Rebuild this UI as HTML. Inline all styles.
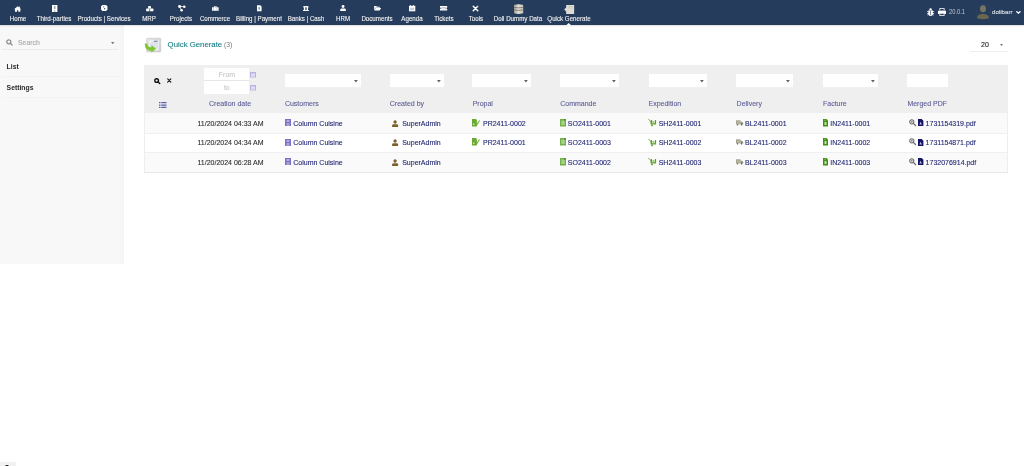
<!DOCTYPE html><html><head><meta charset="utf-8"><style>
*{margin:0;padding:0;box-sizing:border-box}
html,body{width:1024px;height:466px;overflow:hidden;background:#fff;font-family:"Liberation Sans",sans-serif}
#root{position:absolute;left:0;top:0;width:1024px;height:466px;will-change:transform}
.a{position:absolute;white-space:nowrap;line-height:1}
svg{position:absolute;overflow:visible;z-index:3}
#hdr{position:absolute;left:0;top:0;width:1024px;height:25px;background:#263c5c;box-shadow:0 1px 1.5px rgba(0,0,0,0.13);z-index:2}
.mt{position:absolute;z-index:3;top:15.9px;font-size:6.5px;color:#f4f4f4;transform:translateX(-50%) scaleX(0.95);-webkit-text-stroke:0.1px #f4f4f4;white-space:nowrap;line-height:1}
#side{position:absolute;left:0;top:25px;width:123.7px;height:238.7px;background:linear-gradient(to right,#f8f8f8 0,#f8f8f8 119px,#f4f4f4 123.7px)}
.th{position:absolute;top:100px;font-size:7px;color:#5a5a96;-webkit-text-stroke:0.08px #5a5a96;line-height:1;white-space:nowrap}
.td{position:absolute;font-size:7px;color:#1c2270;-webkit-text-stroke:0.08px #1c2270;line-height:1;white-space:nowrap}
.dt{color:#2e2e2e;-webkit-text-stroke:0.1px #2e2e2e}
.sel{position:absolute;top:74px;height:13px;background:#fff}
.sel svg{position:absolute;right:3.3px;top:5.5px}
</style></head><body><div id="root">
<div id="hdr"></div>
<div class="mt" style="left:17.6px">Home</div>
<div class="mt" style="left:54.1px">Third-parties</div>
<div class="mt" style="left:104.1px">Products | Services</div>
<div class="mt" style="left:149.4px">MRP</div>
<div class="mt" style="left:181px">Projects</div>
<div class="mt" style="left:215px">Commerce</div>
<div class="mt" style="left:259.1px">Billing | Payment</div>
<div class="mt" style="left:305.9px">Banks | Cash</div>
<div class="mt" style="left:342.5px">HRM</div>
<div class="mt" style="left:377.4px">Documents</div>
<div class="mt" style="left:411.9px">Agenda</div>
<div class="mt" style="left:444px">Tickets</div>
<div class="mt" style="left:475.5px">Tools</div>
<div class="mt" style="left:518.2px">Doli Dummy Data</div>
<div class="mt" style="left:569px">Quick Generate</div>
<svg style="left:13.9px;top:5.6px" width="7.3" height="5.8" viewBox="0 0 16 13"><path fill="#fff" d="M8 0.5L11 3V1H13V4.8L16 7.3H14V13H9.5V9.5H6.5V13H2V7.3H0Z"/></svg>
<svg style="left:51.5px;top:4.8px" width="5.4" height="7" viewBox="0 0 10 13"><rect width="10" height="13" fill="#fff"/><rect x="3.5" y="1.5" width="3" height="6" fill="#a0a8b8"/><rect x="3.8" y="9" width="2.4" height="4" fill="#c0c6d0"/></svg>
<svg style="left:100.8px;top:5.1px" width="6.5" height="5.9" viewBox="0 0 14 13"><path fill="#fff" d="M3 0H11L14 3V10L11 13H3L0 10V3Z"/><ellipse cx="5.8" cy="4" rx="1.4" ry="1.5" fill="#43506a"/><ellipse cx="8" cy="8.2" rx="1.5" ry="1.7" fill="#3b4660"/></svg>
<svg style="left:145.8px;top:5.8px" width="7.6" height="5.4" viewBox="0 0 16 11"><rect x="4.5" y="0" width="6" height="5.5" rx="1" fill="#fff"/><rect x="0.3" y="5" width="7.2" height="6" rx="1.2" fill="#fff"/><rect x="8.3" y="5" width="7.4" height="6" rx="1.2" fill="#fff"/><path d="M7.9 4.5V11" stroke="#263c5c" stroke-width="0.8"/></svg>
<svg style="left:177.5px;top:4.9px" width="7.8" height="6.4" viewBox="0 0 16 13"><path d="M3.2 3.1H12.7M3.2 3.1L7.4 10.6" stroke="#fff" stroke-width="1.6"/><circle cx="3.2" cy="3.1" r="3" fill="#fff"/><circle cx="12.9" cy="3.6" r="2.6" fill="#fff"/><circle cx="7.4" cy="10.6" r="2.7" fill="#fff"/></svg>
<svg style="left:212px;top:6.2px" width="6.7" height="4.7" viewBox="0 0 14 10"><path fill="#fff" d="M0 2.5H14V10H0Z M4.5 0H9.5V2.5H8V1.2H6V2.5H4.5Z"/><rect x="3" y="2.5" width="1" height="7.5" fill="#9aa3b3"/><rect x="10" y="2.5" width="1" height="7.5" fill="#9aa3b3"/></svg>
<svg style="left:257.1px;top:5.4px" width="4.6" height="6.3" viewBox="0 0 10 13"><path fill="#fff" d="M0 0H7L10 3V13H0Z"/><rect x="3" y="4" width="3.5" height="6" fill="#9aa3b3"/></svg>
<svg style="left:302.9px;top:5.8px" width="5.8" height="5.1" viewBox="0 0 12 10.6"><path fill="#fff" d="M0.3 0.3Q6 -0.5 11.7 0.3L11.4 3H0.6Z M0 8.4H12V10.6H0Z M1.8 3H4.6V8.6H1.8Z M7.6 3H10.4V8.6H7.6Z"/><rect x="4.6" y="3" width="3" height="5.4" fill="#7a84b0"/></svg>
<svg style="left:339.5px;top:5.4px" width="6.1" height="6.1" viewBox="0 0 12 12"><circle cx="6" cy="3" r="2.8" fill="#fff"/><path fill="#fff" d="M0.5 12V9.5Q0.5 7 3 7H9Q11.5 7 11.5 9.5V12Z"/></svg>
<svg style="left:373.7px;top:6.3px" width="7.3" height="4.4" viewBox="0 0 16 10"><path fill="#fff" d="M0 0H5L6.5 1.5H13V4H3L0 10Z M3.5 4.5H16L12.5 10H0.5Z"/></svg>
<svg style="left:408.7px;top:5.4px" width="6.3" height="6.3" viewBox="0 0 12 12"><path fill="#fff" d="M0 1.5H12V12H0Z"/><rect x="2.5" y="0" width="1.5" height="2.5" fill="#fff"/><rect x="8" y="0" width="1.5" height="2.5" fill="#fff"/><rect x="2" y="5" width="8" height="5" fill="#c8cdd6"/></svg>
<svg style="left:440px;top:6.3px" width="7.2" height="4.6" viewBox="0 0 16 10"><path fill="#fff" d="M0 0H16V3.2A1.8 1.8 0 0 0 16 6.8V10H0V6.8A1.8 1.8 0 0 0 0 3.2Z"/><rect x="3" y="3" width="10" height="4" fill="#8e97a8"/><rect x="4" y="4" width="8" height="2" fill="#fff"/></svg>
<svg style="left:471.9px;top:5px" width="7" height="7" viewBox="0 0 14 14"><path d="M2.5 2.5L11.5 11.5M11.5 2.5L2.5 11.5" stroke="#fff" stroke-width="2.9" stroke-linecap="round"/><circle cx="12" cy="2" r="1.2" fill="#263c5c"/></svg>
<svg style="left:513.8px;top:3.7px" width="9.2" height="10.3" viewBox="0 0 18 20"><defs><linearGradient id="dbg" x1="0" x2="1"><stop offset="0" stop-color="#9c988e"/><stop offset="0.45" stop-color="#e2dfd8"/><stop offset="1" stop-color="#c4c0b6"/></linearGradient></defs><path fill="url(#dbg)" d="M0 1.8Q9 -0.8 18 1.8V18.2Q9 20.8 0 18.2Z"/><path d="M0 6.5Q9 8.5 18 6.5M0 11.5Q9 13.5 18 11.5" stroke="#777164" stroke-width="1.6" fill="none"/></svg>
<svg style="left:564px;top:4.5px" width="10.3" height="9" viewBox="0 0 20 18"><path fill="#dedbd4" d="M4 0H20V18H4V13L0 9L4 5Z"/><path d="M8 3H17M8 6H17" stroke="#bdb9b0" stroke-width="1"/></svg>
<svg style="left:566.3px;top:22.6px" width="5.4" height="2.4" viewBox="0 0 10 4"><path fill="#fff" d="M5 0L10 4.5H0Z"/></svg>
<svg style="left:927px;top:8px" width="7.2" height="8" viewBox="0 0 14 16"><path fill="#fff" d="M4.5 3A2.5 2.5 0 0 1 9.5 3V4.5H4.5Z M2.5 5H11.5V12A4.5 4 0 0 1 2.5 12Z M0 6.5H2.5V8H0Z M11.5 6.5H14V8H11.5Z M0 10H2.5V11.5H0Z M11.5 10H14V11.5H11.5Z M0.5 14L2.5 12.5L3 13.5L1.2 15Z M13.5 14L11.5 12.5L11 13.5L12.8 15Z"/><rect x="6.4" y="5" width="1.2" height="9" fill="#263c5c"/></svg>
<svg style="left:938px;top:8px" width="8" height="8" viewBox="0 0 16 16"><path fill="#fff" d="M3 0H13V5H3Z M0 5.5H16V12H13V10.5H3V12H0Z M3 11H13V16H3Z"/><rect x="4.5" y="1.5" width="7" height="3.5" fill="#263c5c"/><rect x="4.5" y="12" width="7" height="2.5" fill="#263c5c"/></svg>
<div class="a" style="left:949px;top:9.3px;z-index:3;font-size:6.4px;color:#c4c9d2;transform:scaleX(0.9);transform-origin:0 0">20.0.1</div>
<svg style="left:975.5px;top:3.2px" width="15" height="17.5" viewBox="0 0 30 35"><circle cx="15" cy="17" r="14.5" fill="none" stroke="#34466a" stroke-width="0.8"/><ellipse cx="14" cy="11.5" rx="6" ry="7" fill="#777462"/><path fill="#6a6650" d="M2 30.5Q2 22 14 21.5Q26 22 26 30.5Q14 34 2 30.5Z"/></svg>
<div class="a" style="left:992px;top:9.4px;z-index:3;font-size:6.15px;color:#dfe3ea;-webkit-text-stroke:0.08px #dfe3ea">dolibarr</div>
<svg style="left:1015.6px;top:11px" width="4.8" height="2.8" viewBox="0 0 10 6"><path d="M1.5 1.5L5 4.5L8.5 1.5" stroke="#fff" stroke-width="2.8" fill="none" stroke-linecap="round"/></svg>
<div id="side"></div>
<svg style="left:6px;top:39px" width="6.8" height="6.8" viewBox="0 0 14 14"><circle cx="5.8" cy="5.8" r="4.2" stroke="#8d8d8d" stroke-width="2.6" fill="none"/><path d="M9 9L12.5 12.5" stroke="#8d8d8d" stroke-width="2.8" stroke-linecap="round"/></svg>
<div class="a" style="left:18px;top:39.8px;font-size:6.9px;color:#a8a8a8;-webkit-text-stroke:0.1px #a8a8a8">Search</div>
<svg style="left:110.8px;top:41.7px" width="3.4" height="2.2" viewBox="0 0 6 4"><path fill="#777" d="M0 0H6L3 4Z"/></svg>
<div class="a" style="left:2px;top:49.3px;width:116px;height:1px;background:#ececec"></div>
<div class="a" style="left:6.6px;top:63.6px;font-size:6.8px;font-weight:bold;color:#2a2a2a">List</div>
<div class="a" style="left:2px;top:76px;width:118px;height:1px;background:#f3f3f3"></div>
<div class="a" style="left:6.6px;top:85.3px;font-size:6.8px;font-weight:bold;color:#2a2a2a">Settings</div>
<div class="a" style="left:2px;top:97.3px;width:118px;height:1px;background:#f3f3f3"></div>
<svg style="left:145px;top:37.5px" width="16" height="14.5" viewBox="0 0 32 29"><defs><linearGradient id="qgb" x1="0" y1="0" x2="1" y2="1"><stop offset="0" stop-color="#e4e4e4"/><stop offset="1" stop-color="#cfcfcf"/></linearGradient></defs><rect x="3.5" y="0.5" width="28" height="27.5" rx="1.5" fill="url(#qgb)" stroke="#bdbdbd"/><rect x="7" y="4" width="21" height="21" fill="#eceef2"/><path d="M14 8H26M10 12H26M10 16H26M12 20H26" stroke="#c3cbd8" stroke-width="1.2"/><path d="M18 6.5H25" stroke="#71839c" stroke-width="2.2"/><path fill="#7dc832" d="M-0.3 11C-0.5 21 4 25.5 12.8 25.5V29L22 21.5L12.8 14V18.5C7 18.5 4.8 16 4.8 11Z"/></svg>
<div class="a" style="left:167.6px;top:40.9px;font-size:7.8px;color:#137b83;-webkit-text-stroke:0.1px #137b83">Quick Generate</div>
<div class="a" style="left:224px;top:41.7px;font-size:6.8px;color:#777">(3)</div>
<div class="a" style="left:981px;top:40.9px;font-size:7px;color:#222;-webkit-text-stroke:0.12px #222">20</div>
<svg style="left:999.9px;top:43.5px" width="3" height="2" viewBox="0 0 6 4"><path fill="#777" d="M0 0H6L3 4Z"/></svg>
<div class="a" style="left:970px;top:51px;width:38px;height:1px;background:#efefef"></div>
<div class="a" style="left:144px;top:64.6px;width:864px;height:48.4px;background:#efefef"></div>
<div class="a" style="left:144px;top:113px;width:864px;height:19.7px;background:#fafafa;border-left:1px solid #eee;border-right:1px solid #eee"></div>
<div class="a" style="left:144px;top:132.7px;width:864px;height:19.7px;background:#fff;border-left:1px solid #eee;border-right:1px solid #eee"></div>
<div class="a" style="left:144px;top:152.3px;width:864px;height:19.7px;background:#fafafa;border-left:1px solid #eee;border-right:1px solid #eee"></div>
<div class="a" style="left:144px;top:132.7px;width:864px;height:1px;background:#f0f0f0"></div>
<div class="a" style="left:144px;top:152.3px;width:864px;height:1px;background:#f0f0f0"></div>
<div class="a" style="left:144px;top:171.8px;width:864px;height:1px;background:#e6e6e6"></div>
<svg style="left:154.4px;top:77.8px" width="6.6" height="6" viewBox="0 0 14 13"><circle cx="5.6" cy="5.6" r="4" stroke="#111" stroke-width="3" fill="none"/><path d="M8.8 8.8L12.3 12.1" stroke="#111" stroke-width="3" stroke-linecap="round"/></svg>
<svg style="left:167px;top:78.1px" width="4.5" height="5" viewBox="0 0 10 10"><path d="M1.5 1.5L8.5 8.5M8.5 1.5L1.5 8.5" stroke="#111" stroke-width="2.4" stroke-linecap="round"/></svg>
<div class="a" style="left:204px;top:68px;width:45px;height:12.5px;background:#fff"></div>
<div class="a" style="left:204px;top:81px;width:45px;height:13px;background:#fff"></div>
<div class="a" style="left:204px;top:80.3px;width:45px;height:0.8px;background:#e6e6e6"></div>
<div class="a" style="left:218.8px;top:70.6px;font-size:7px;color:#bbbbbb">From</div>
<div class="a" style="left:223.9px;top:83.7px;font-size:7px;color:#bbbbbb">to</div>
<svg style="left:250px;top:72.2px" width="6" height="5.5" viewBox="0 0 12 11"><rect x="0" y="0" width="12" height="11" fill="#b8b3e2"/><rect x="2" y="3" width="8" height="6.5" fill="#e6e4f4"/><path d="M4 5V9M8 5V9M3 7H9" stroke="#c8c4e8" stroke-width="0.8"/></svg>
<svg style="left:250px;top:85px" width="6" height="5.5" viewBox="0 0 12 11"><rect x="0" y="0" width="12" height="11" fill="#b8b3e2"/><rect x="2" y="3" width="8" height="6.5" fill="#e6e4f4"/><path d="M4 5V9M8 5V9M3 7H9" stroke="#c8c4e8" stroke-width="0.8"/></svg>
<div class="sel" style="left:284.8px;width:76.5px"><svg width="3.8" height="2.4" viewBox="0 0 8 5"><path fill="#606060" d="M0 0H8L4 5Z"/></svg></div>
<div class="sel" style="left:389.8px;width:54.5px"><svg width="3.8" height="2.4" viewBox="0 0 8 5"><path fill="#606060" d="M0 0H8L4 5Z"/></svg></div>
<div class="sel" style="left:472.1px;width:58.5px"><svg width="3.8" height="2.4" viewBox="0 0 8 5"><path fill="#606060" d="M0 0H8L4 5Z"/></svg></div>
<div class="sel" style="left:560.2px;width:58.7px"><svg width="3.8" height="2.4" viewBox="0 0 8 5"><path fill="#606060" d="M0 0H8L4 5Z"/></svg></div>
<div class="sel" style="left:648.5px;width:58.2px"><svg width="3.8" height="2.4" viewBox="0 0 8 5"><path fill="#606060" d="M0 0H8L4 5Z"/></svg></div>
<div class="sel" style="left:736px;width:57.4px"><svg width="3.8" height="2.4" viewBox="0 0 8 5"><path fill="#606060" d="M0 0H8L4 5Z"/></svg></div>
<div class="sel" style="left:823px;width:55.4px"><svg width="3.8" height="2.4" viewBox="0 0 8 5"><path fill="#606060" d="M0 0H8L4 5Z"/></svg></div>
<div class="sel" style="left:907.4px;width:40.2px"></div>
<svg style="left:159.3px;top:101.8px" width="7.5" height="6.1" viewBox="0 0 15 12"><path fill="#5d5da8" d="M0 0H3V2.5H0Z M4.5 0H15V2.5H4.5Z M0 4.75H3V7.25H0Z M4.5 4.75H15V7.25H4.5Z M0 9.5H3V12H0Z M4.5 9.5H15V12H4.5Z"/></svg>
<div class="th" style="left:209px">Creation date</div>
<div class="th" style="left:284.9px">Customers</div>
<div class="th" style="left:389.8px">Created by</div>
<div class="th" style="left:472.7px">Propal</div>
<div class="th" style="left:560.2px">Commande</div>
<div class="th" style="left:648.5px">Expedition</div>
<div class="th" style="left:736.6px">Delivery</div>
<div class="th" style="left:823px">Facture</div>
<div class="th" style="left:907.4px">Merged PDF</div>
<div class="td dt" style="left:197.5px;top:119.8px">11/20/2024 04:33 AM</div>
<svg style="left:285px;top:119.3px" width="6" height="7" viewBox="0 0 12 14"><rect width="12" height="14" fill="#7b70c4"/><rect x="3" y="2" width="6" height="4" fill="#b4adde"/><rect x="3" y="8" width="6" height="6" fill="#a9a2da"/></svg>
<div class="td" style="left:293.3px;top:119.8px">Column Cuisine</div>
<svg style="left:391.8px;top:119.6px" width="6.2" height="7" viewBox="0 0 12 14"><circle cx="6" cy="4" r="3.3" fill="#7d5e2c"/><path fill="#7d5e2c" d="M0 14V11Q0 8.5 3 8.5H9Q12 8.5 12 11V14Z"/></svg>
<div class="td" style="left:402.2px;top:119.8px">SuperAdmin</div>
<svg style="left:472.2px;top:118.9px" width="7.8" height="7.5" viewBox="0 0 16 15"><path fill="#6aaa32" d="M0 0H8L10 2V15H0Z"/><path d="M7 9L9.5 12L15.5 3" stroke="#6aaa32" stroke-width="2.2" fill="none"/><rect x="2" y="9" width="3" height="3" fill="#c9e6b0"/></svg>
<div class="td" style="left:483px;top:119.8px">PR2411-0002</div>
<svg style="left:560px;top:118.9px" width="6" height="7.5" viewBox="0 0 12 15"><rect width="12" height="15" fill="#72b04a"/><rect x="2.5" y="3" width="7" height="9" fill="#a6d08a"/><rect x="8" y="0.5" width="3" height="2.5" fill="#3d7a1e"/></svg>
<div class="td" style="left:567.8px;top:119.8px">SO2411-0001</div>
<svg style="left:648px;top:119.2px" width="8" height="7.5" viewBox="0 0 16 15"><path d="M0.8 0.5L5.5 4.5L6.5 11" stroke="#6aaa32" stroke-width="2" fill="none"/><path d="M7 2V9.8H15V2" stroke="#5f9e2a" stroke-width="2.4" fill="none"/><rect x="9" y="4" width="4" height="4" fill="#9ccc78"/><circle cx="8" cy="12.8" r="1.8" fill="#5f9e2a"/></svg>
<div class="td" style="left:658.7px;top:119.8px">SH2411-0001</div>
<svg style="left:736px;top:119.7px" width="7.1" height="5.7" viewBox="0 0 14 11"><rect x="0" y="0.5" width="9" height="8" fill="#a3a095"/><rect x="2" y="2.5" width="5.5" height="4.5" fill="#c2b787"/><path fill="#84907a" d="M9 3.5H12L14 6.5V9H9Z"/><circle cx="3" cy="9.5" r="1.5" fill="#6a6a6a"/><circle cx="11" cy="9.5" r="1.5" fill="#5a6a50"/></svg>
<div class="td" style="left:745px;top:119.8px">BL2411-0001</div>
<svg style="left:823px;top:118.9px" width="5" height="7.5" viewBox="0 0 10 15"><path fill="#3f9012" d="M0 0H7L10 3V15H0Z"/><rect x="3" y="6" width="4" height="6" fill="#bfe0a8"/><path d="M2 2.5H6" stroke="#bfe0a8" stroke-width="1"/></svg>
<div class="td" style="left:830.3px;top:119.8px">IN2411-0001</div>
<svg style="left:908.6px;top:118.9px" width="7" height="7" viewBox="0 0 14 14"><circle cx="5.6" cy="5.6" r="4.2" stroke="#6a6a6a" stroke-width="2.1" fill="none"/><path d="M8.8 8.8L13 13" stroke="#6a6a6a" stroke-width="2.5" stroke-linecap="round"/><path d="M3.6 5.6H7.6M5.6 3.6V7.6" stroke="#6a6a6a" stroke-width="1.3"/></svg>
<svg style="left:918.3px;top:119.0px" width="5.4" height="7" viewBox="0 0 11 14"><path fill="#151566" d="M0 0H7.5L11 3.5V14H0Z"/><path fill="#fff" d="M3 11L5 5.5L8 11Z" opacity="0.75"/></svg>
<div class="td" style="left:925.6px;top:119.8px">1731154319.pdf</div>
<div class="td dt" style="left:197.5px;top:139.3px">11/20/2024 04:34 AM</div>
<svg style="left:285px;top:138.8px" width="6" height="7" viewBox="0 0 12 14"><rect width="12" height="14" fill="#7b70c4"/><rect x="3" y="2" width="6" height="4" fill="#b4adde"/><rect x="3" y="8" width="6" height="6" fill="#a9a2da"/></svg>
<div class="td" style="left:293.3px;top:139.3px">Column Cuisine</div>
<svg style="left:391.8px;top:139.1px" width="6.2" height="7" viewBox="0 0 12 14"><circle cx="6" cy="4" r="3.3" fill="#7d5e2c"/><path fill="#7d5e2c" d="M0 14V11Q0 8.5 3 8.5H9Q12 8.5 12 11V14Z"/></svg>
<div class="td" style="left:402.2px;top:139.3px">SuperAdmin</div>
<svg style="left:472.2px;top:138.4px" width="7.8" height="7.5" viewBox="0 0 16 15"><path fill="#6aaa32" d="M0 0H8L10 2V15H0Z"/><path d="M7 9L9.5 12L15.5 3" stroke="#6aaa32" stroke-width="2.2" fill="none"/><rect x="2" y="9" width="3" height="3" fill="#c9e6b0"/></svg>
<div class="td" style="left:483px;top:139.3px">PR2411-0001</div>
<svg style="left:560px;top:138.4px" width="6" height="7.5" viewBox="0 0 12 15"><rect width="12" height="15" fill="#72b04a"/><rect x="2.5" y="3" width="7" height="9" fill="#a6d08a"/><rect x="8" y="0.5" width="3" height="2.5" fill="#3d7a1e"/></svg>
<div class="td" style="left:567.8px;top:139.3px">SO2411-0003</div>
<svg style="left:648px;top:138.7px" width="8" height="7.5" viewBox="0 0 16 15"><path d="M0.8 0.5L5.5 4.5L6.5 11" stroke="#6aaa32" stroke-width="2" fill="none"/><path d="M7 2V9.8H15V2" stroke="#5f9e2a" stroke-width="2.4" fill="none"/><rect x="9" y="4" width="4" height="4" fill="#9ccc78"/><circle cx="8" cy="12.8" r="1.8" fill="#5f9e2a"/></svg>
<div class="td" style="left:658.7px;top:139.3px">SH2411-0002</div>
<svg style="left:736px;top:139.2px" width="7.1" height="5.7" viewBox="0 0 14 11"><rect x="0" y="0.5" width="9" height="8" fill="#a3a095"/><rect x="2" y="2.5" width="5.5" height="4.5" fill="#c2b787"/><path fill="#84907a" d="M9 3.5H12L14 6.5V9H9Z"/><circle cx="3" cy="9.5" r="1.5" fill="#6a6a6a"/><circle cx="11" cy="9.5" r="1.5" fill="#5a6a50"/></svg>
<div class="td" style="left:745px;top:139.3px">BL2411-0002</div>
<svg style="left:823px;top:138.4px" width="5" height="7.5" viewBox="0 0 10 15"><path fill="#3f9012" d="M0 0H7L10 3V15H0Z"/><rect x="3" y="6" width="4" height="6" fill="#bfe0a8"/><path d="M2 2.5H6" stroke="#bfe0a8" stroke-width="1"/></svg>
<div class="td" style="left:830.3px;top:139.3px">IN2411-0002</div>
<svg style="left:908.6px;top:138.4px" width="7" height="7" viewBox="0 0 14 14"><circle cx="5.6" cy="5.6" r="4.2" stroke="#6a6a6a" stroke-width="2.1" fill="none"/><path d="M8.8 8.8L13 13" stroke="#6a6a6a" stroke-width="2.5" stroke-linecap="round"/><path d="M3.6 5.6H7.6M5.6 3.6V7.6" stroke="#6a6a6a" stroke-width="1.3"/></svg>
<svg style="left:918.3px;top:138.5px" width="5.4" height="7" viewBox="0 0 11 14"><path fill="#151566" d="M0 0H7.5L11 3.5V14H0Z"/><path fill="#fff" d="M3 11L5 5.5L8 11Z" opacity="0.75"/></svg>
<div class="td" style="left:925.6px;top:139.3px">1731154871.pdf</div>
<div class="td dt" style="left:197.5px;top:158.8px">11/20/2024 06:28 AM</div>
<svg style="left:285px;top:158.3px" width="6" height="7" viewBox="0 0 12 14"><rect width="12" height="14" fill="#7b70c4"/><rect x="3" y="2" width="6" height="4" fill="#b4adde"/><rect x="3" y="8" width="6" height="6" fill="#a9a2da"/></svg>
<div class="td" style="left:293.3px;top:158.8px">Column Cuisine</div>
<svg style="left:391.8px;top:158.6px" width="6.2" height="7" viewBox="0 0 12 14"><circle cx="6" cy="4" r="3.3" fill="#7d5e2c"/><path fill="#7d5e2c" d="M0 14V11Q0 8.5 3 8.5H9Q12 8.5 12 11V14Z"/></svg>
<div class="td" style="left:402.2px;top:158.8px">SuperAdmin</div>
<svg style="left:560px;top:157.9px" width="6" height="7.5" viewBox="0 0 12 15"><rect width="12" height="15" fill="#72b04a"/><rect x="2.5" y="3" width="7" height="9" fill="#a6d08a"/><rect x="8" y="0.5" width="3" height="2.5" fill="#3d7a1e"/></svg>
<div class="td" style="left:567.8px;top:158.8px">SO2411-0002</div>
<svg style="left:648px;top:158.2px" width="8" height="7.5" viewBox="0 0 16 15"><path d="M0.8 0.5L5.5 4.5L6.5 11" stroke="#6aaa32" stroke-width="2" fill="none"/><path d="M7 2V9.8H15V2" stroke="#5f9e2a" stroke-width="2.4" fill="none"/><rect x="9" y="4" width="4" height="4" fill="#9ccc78"/><circle cx="8" cy="12.8" r="1.8" fill="#5f9e2a"/></svg>
<div class="td" style="left:658.7px;top:158.8px">SH2411-0003</div>
<svg style="left:736px;top:158.7px" width="7.1" height="5.7" viewBox="0 0 14 11"><rect x="0" y="0.5" width="9" height="8" fill="#a3a095"/><rect x="2" y="2.5" width="5.5" height="4.5" fill="#c2b787"/><path fill="#84907a" d="M9 3.5H12L14 6.5V9H9Z"/><circle cx="3" cy="9.5" r="1.5" fill="#6a6a6a"/><circle cx="11" cy="9.5" r="1.5" fill="#5a6a50"/></svg>
<div class="td" style="left:745px;top:158.8px">BL2411-0003</div>
<svg style="left:823px;top:157.9px" width="5" height="7.5" viewBox="0 0 10 15"><path fill="#3f9012" d="M0 0H7L10 3V15H0Z"/><rect x="3" y="6" width="4" height="6" fill="#bfe0a8"/><path d="M2 2.5H6" stroke="#bfe0a8" stroke-width="1"/></svg>
<div class="td" style="left:830.3px;top:158.8px">IN2411-0003</div>
<svg style="left:908.6px;top:157.9px" width="7" height="7" viewBox="0 0 14 14"><circle cx="5.6" cy="5.6" r="4.2" stroke="#6a6a6a" stroke-width="2.1" fill="none"/><path d="M8.8 8.8L13 13" stroke="#6a6a6a" stroke-width="2.5" stroke-linecap="round"/><path d="M3.6 5.6H7.6M5.6 3.6V7.6" stroke="#6a6a6a" stroke-width="1.3"/></svg>
<svg style="left:918.3px;top:158.0px" width="5.4" height="7" viewBox="0 0 11 14"><path fill="#151566" d="M0 0H7.5L11 3.5V14H0Z"/><path fill="#fff" d="M3 11L5 5.5L8 11Z" opacity="0.75"/></svg>
<div class="td" style="left:925.6px;top:158.8px">1732076914.pdf</div>
<div class="a" style="left:0;top:461.7px;width:16px;height:5px;background:#f2f2f2"></div>
<div class="a" style="left:4.5px;top:464.8px;width:4.6px;height:4px;border-radius:1.5px;background:#1a1a1a"></div>
</div></body></html>
